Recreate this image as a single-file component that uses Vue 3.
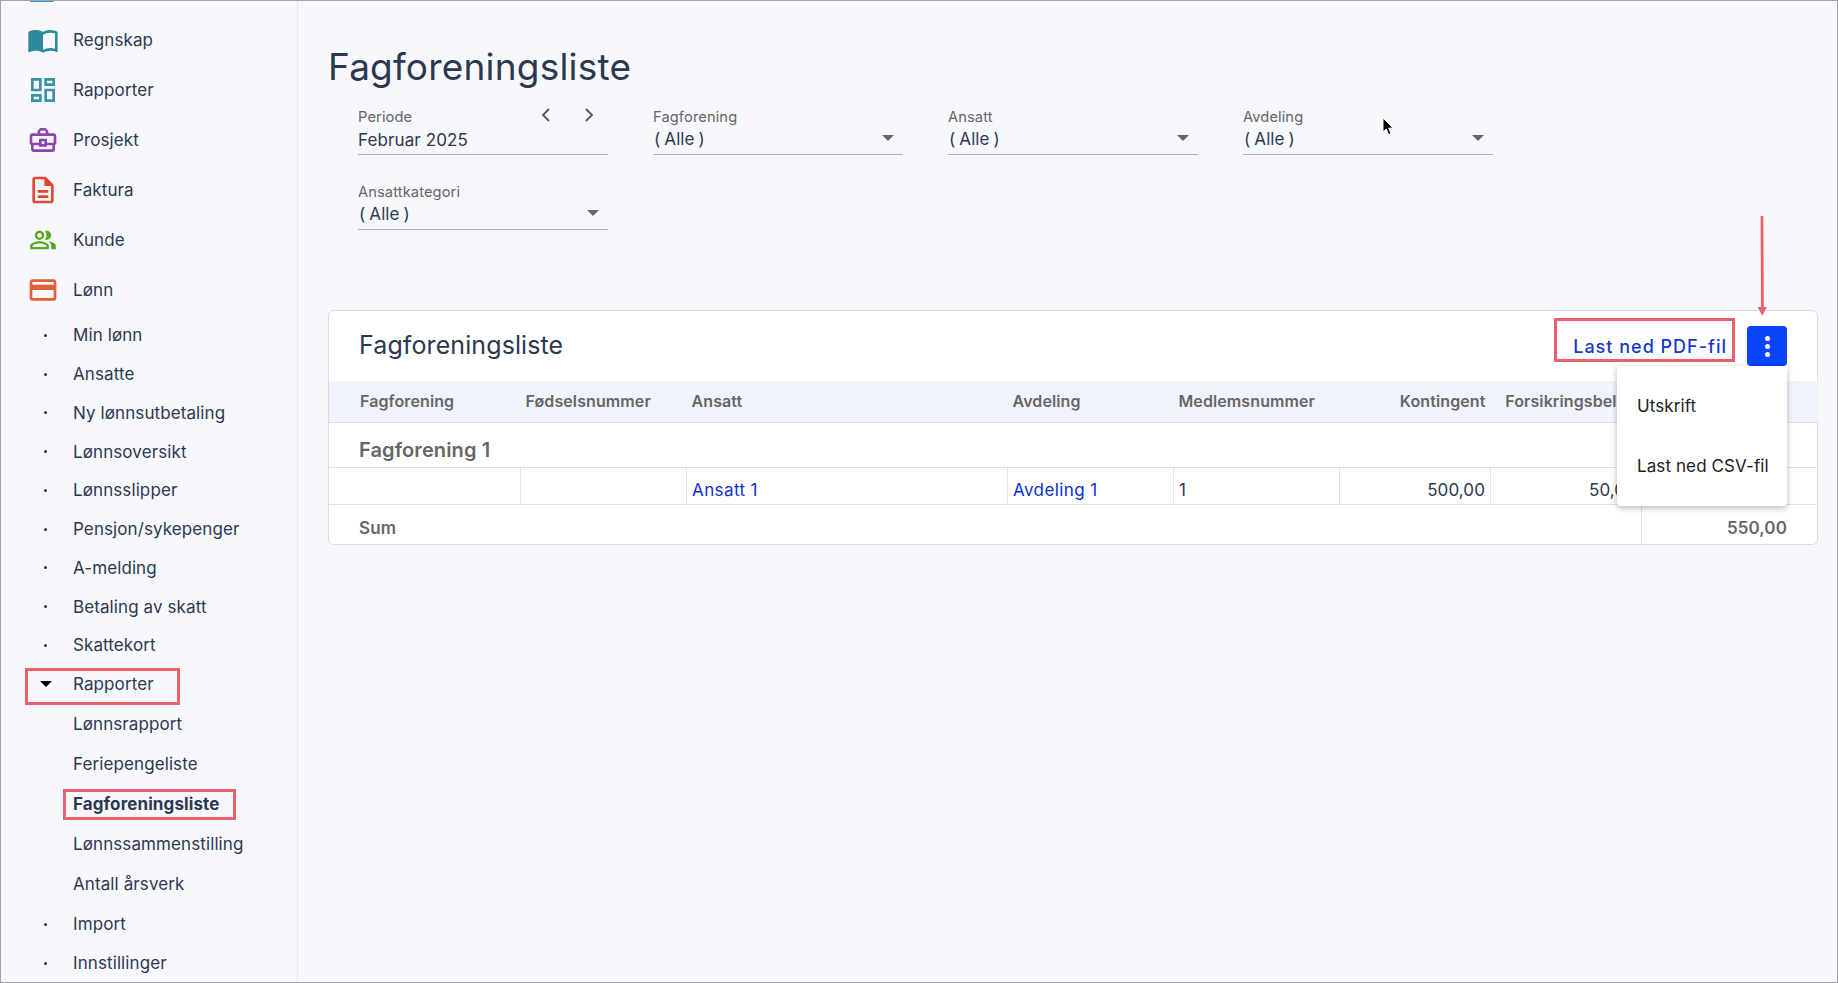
<template>
  <div class="page">
    <aside class="sidebar">
      <div class="nav-item">
        <svg class="nav-icon" viewBox="0 0 24 24" fill="#3498db"><path d="M2.25 4H20v17H2.25z" /></svg>
      </div>
      <div v-for="item in mainNav" :key="item.label" class="nav-item">
        <svg class="nav-icon" :class="item.cls" viewBox="0 0 24 24" :fill="item.color"><path :d="item.path" /></svg>
        <span class="nav-text">{{ item.label }}</span>
      </div>

      <div v-for="item in salaryNav" :key="item" class="sub-item">
        <span class="dot"></span>
        <span class="nav-text">{{ item }}</span>
      </div>

      <div class="sub-item">
        <span class="caret"></span>
        <span class="nav-text">Rapporter</span>
      </div>
      <div
        v-for="item in reportNav"
        :key="item"
        class="report-item"
        :class="{ active: item === 'Fagforeningsliste' }"
      >
        {{ item }}
      </div>

      <div v-for="item in bottomNav" :key="item" class="sub-item">
        <span class="dot"></span>
        <span class="nav-text">{{ item }}</span>
      </div>
    </aside>

    <main class="content">
      <h1 class="page-title">Fagforeningsliste</h1>

      <div class="filters">
        <div class="field">
          <label>Periode</label>
          <div class="value">Februar 2025</div>
          <div class="period-nav">
            <svg width="14" height="14" viewBox="0 0 14 14"><path d="M10 1 L4 7 L10 13" /></svg>
            <svg width="14" height="14" viewBox="0 0 14 14"><path d="M4 1 L10 7 L4 13" /></svg>
          </div>
        </div>
        <div v-for="name in filterNames" :key="name" class="field">
          <label>{{ name }}</label>
          <div class="value alle"><span class="paren-l">(</span>Alle<span class="paren-r">)</span></div>
          <span class="select-arrow"></span>
        </div>
      </div>

      <section class="card">
        <div class="card-header">
          <h2 class="card-title">Fagforeningsliste</h2>
          <div class="actions">
            <a class="pdf-link">Last ned PDF-fil</a>
            <button class="more-btn">
              <i></i><i></i><i></i>
            </button>
            <div class="menu">
              <div class="menu-item">Utskrift</div>
              <div class="menu-item">Last ned CSV-fil</div>
            </div>
          </div>
        </div>

        <table class="report-table">
          <colgroup>
            <col v-for="(w, i) in colWidths" :key="i" :style="{ width: w + 'px' }" />
          </colgroup>
          <thead>
            <tr>
              <th class="first">Fagforening</th>
              <th>Fødselsnummer</th>
              <th>Ansatt</th>
              <th>Avdeling</th>
              <th>Medlemsnummer</th>
              <th class="num">Kontingent</th>
              <th class="num">Forsikringsbeløp</th>
              <th class="num last">Sum</th>
            </tr>
          </thead>
          <tbody>
            <tr class="group-row">
              <td colspan="8">Fagforening 1</td>
            </tr>
            <tr class="data-row">
              <td></td>
              <td></td>
              <td><a class="link">Ansatt 1</a></td>
              <td><a class="link">Avdeling 1</a></td>
              <td>1</td>
              <td class="num">500,00</td>
              <td class="num">50,00</td>
              <td class="num last">550,00</td>
            </tr>
            <tr class="sum-row">
              <td colspan="7">Sum</td>
              <td class="num last">550,00</td>
            </tr>
          </tbody>
        </table>
      </section>
    </main>

    <!-- annotations on top of the screenshot -->
    <div class="mark mark-rapporter"></div>
    <div class="mark mark-liste"></div>
    <div class="mark mark-pdf"></div>
    <svg class="arrow" width="14" height="102" viewBox="0 0 14 102">
      <path d="M7 1 L7.4 92" stroke="#ee5f6e" stroke-width="2.8" stroke-linecap="round" fill="none" />
      <path d="M2.7 91 L11.7 91 L7.3 100 Z" fill="#ee5f6e" />
    </svg>
    <svg class="cursor" width="14" height="20" viewBox="0 0 14 20">
      <path d="M2 1 L2 15 L5.3 12 L7.6 17.6 L10 16.6 L7.7 11.2 L12 11 Z" fill="#000" stroke="#fff" stroke-width="1" />
    </svg>
  </div>
</template>

<script setup>
const mainNav = [
  {
    label: 'Regnskap',
    color: '#2e8a9c',
    path: 'M21 5c-1.11-.35-2.33-.5-3.5-.5-1.95 0-4.05.4-5.5 1.5-1.45-1.1-3.55-1.5-5.5-1.5S2.45 4.9 1 6v14.65c0 .25.25.5.5.5.1 0 .15-.05.25-.05C3.1 20.45 5.05 20 6.5 20c1.95 0 4.05.4 5.5 1.5 1.35-.85 3.8-1.5 5.5-1.5 1.65 0 3.35.3 4.75 1.05.1.05.15.05.25.05.25 0 .5-.25.5-.5V6c-.6-.45-1.25-.75-2-1zm0 13.5c-1.1-.35-2.3-.5-3.5-.5-1.7 0-4.15.65-5.5 1.5V8c1.35-.85 3.8-1.5 5.5-1.5 1.2 0 2.4.15 3.5.5v11.5z'
  },
  {
    label: 'Rapporter',
    color: '#3b92a6',
    path: 'M19 5v2h-4V5h4M9 5v6H5V5h4m10 8v6h-4v-6h4M9 17v2H5v-2h4M21 3h-8v6h8V3zM11 3H3v10h8V3zm10 8h-8v10h8V11zM11 15H3v6h8v-6z'
  },
  {
    label: 'Prosjekt',
    color: '#8e44ad',
    path: 'M20 7h-4V5l-2-2h-4L8 5v2H4c-1.1 0-2 .9-2 2v5c0 .75.4 1.38 1 1.73V19c0 1.11.89 2 2 2h14c1.11 0 2-.89 2-2v-3.28c.59-.35 1-.99 1-1.72V9c0-1.1-.9-2-2-2zM10 5h4v2h-4V5zM4 9h16v5h-5v-3H9v3H4V9zm9 6h-2v-2h2v2zm6 4H5v-3h4v1h6v-1h4v3z'
  },
  {
    label: 'Faktura',
    color: '#e2472f',
    path: 'M8 16h8v2H8zm0-4h8v2H8zm6-10H6c-1.1 0-2 .9-2 2v16c0 1.1.89 2 1.99 2H18c1.1 0 2-.9 2-2V8l-6-6zm4 18H6V4h7v5h5v11z'
  },
  {
    label: 'Kunde',
    cls: 'small',
    color: '#56a81e',
    path: 'M16.67 13.13C18.04 14.06 19 15.32 19 17v3h4v-3c0-2.18-3.57-3.47-6.33-3.87zM15 12c2.21 0 4-1.79 4-4s-1.79-4-4-4c-.47 0-.91.1-1.33.24C14.5 5.27 15 6.58 15 8s-.5 2.73-1.33 3.76c.42.14.86.24 1.33.24zM9 12c2.21 0 4-1.79 4-4s-1.79-4-4-4-4 1.79-4 4 1.79 4 4 4zm0-6c1.1 0 2 .9 2 2s-.9 2-2 2-2-.9-2-2 .9-2 2-2zM9 13c-2.67 0-8 1.34-8 4v3h16v-3c0-2.66-5.33-4-8-4zm6 5H3v-.99C3.2 16.29 6.3 15 9 15s5.8 1.29 6 2z'
  },
  {
    label: 'Lønn',
    color: '#e45f35',
    path: 'M20 4H4c-1.11 0-1.99.89-1.99 2L2 18c0 1.11.89 2 2 2h16c1.11 0 2-.89 2-2V6c0-1.11-.89-2-2-2zm0 14H4v-6h16v6zm0-10H4V6h16v2z'
  }
]

const salaryNav = [
  'Min lønn',
  'Ansatte',
  'Ny lønnsutbetaling',
  'Lønnsoversikt',
  'Lønnsslipper',
  'Pensjon/sykepenger',
  'A-melding',
  'Betaling av skatt',
  'Skattekort'
]

const reportNav = ['Lønnsrapport', 'Feriepengeliste', 'Fagforeningsliste', 'Lønnssammenstilling', 'Antall årsverk']
const bottomNav = ['Import', 'Innstillinger']
const filterNames = ['Fagforening', 'Ansatt', 'Avdeling', 'Ansattkategori']
const colWidths = [191.5, 166, 321, 166, 166, 151, 151, 176.5]
</script>

<style>
html,
body {
  margin: 0;
  background: #f7f8fe;
}
</style>

<style scoped>
.page {
  position: relative;
  display: flex;
  box-sizing: border-box;
  height: 983px;
  overflow: hidden;
  border: 1px solid #a3a3a3;
  background: #f7f8fe;
  color: #2c3850;
  font-family: Inter, "Noto Sans", sans-serif;
  font-size: 17px;
  letter-spacing: 0.1px;
}

.sidebar {
  flex: 0 0 297px;
  box-sizing: border-box;
  margin-top: -36px;
  border-right: 1px solid #e6e8f0;
}

.nav-item {
  display: flex;
  align-items: center;
  height: 50px;
}

.nav-icon {
  flex: 0 0 32px;
  width: 32px;
  height: 32px;
  margin: 0 14px 0 26px;
}

.nav-icon.small {
  flex-basis: 28px;
  width: 28px;
  height: 28px;
  margin: 0 16px 0 28px;
}

.sub-item {
  display: flex;
  align-items: center;
  height: 38.75px;
}

.nav-item + .sub-item {
  margin-top: 1px;
}

.report-item + .sub-item {
  margin-top: 1.5px;
}

.dot {
  width: 3px;
  height: 3px;
  margin: 0 26px 0 43px;
  border-radius: 50%;
  background: #2c3850;
}

.caret {
  width: 0;
  height: 0;
  margin: 0 21px 0 39px;
  border-top: 6px solid #000;
  border-left: 6px solid transparent;
  border-right: 6px solid transparent;
}

.report-item {
  display: flex;
  align-items: center;
  height: 40px;
  padding-left: 72px;
}

.report-item.active {
  font-weight: 700;
}

.content {
  flex: 1;
  min-width: 0;
  padding: 0 19px 0 30px;
}

.page-title {
  margin: 42px 0 0;
  font-size: 37px;
  line-height: 48px;
  font-weight: 400;
  letter-spacing: 0.2px;
}

.filters {
  display: flex;
  flex-wrap: wrap;
  width: 1240px;
  padding: 0 0 0 30px;
}

.field {
  position: relative;
  box-sizing: border-box;
  width: 250px;
  height: 47px;
  margin: 17px 45px 11px 0;
  border-bottom: 1px solid #aeb0b6;
}

.field label {
  display: block;
  height: 18px;
  font-size: 14.7px;
  line-height: 18px;
  color: #666;
}

.value {
  height: 28px;
  font-size: 17px;
  line-height: 28px;
}

.alle {
  line-height: 26px;
}

.paren-l {
  margin: 0 4px 0 1px;
}

.paren-r {
  margin-left: 4px;
}

.period-nav {
  position: absolute;
  top: 0;
  right: 12px;
  display: flex;
  gap: 29px;
}

.period-nav path {
  fill: none;
  stroke: #555;
  stroke-width: 1.8;
}

.select-arrow {
  position: absolute;
  right: 9px;
  top: 27px;
  border-top: 6px solid #666;
  border-left: 6px solid transparent;
  border-right: 6px solid transparent;
}

.card {
  margin-top: 69px;
  background: #fff;
  border: 1px solid #dcdde3;
  border-radius: 6px;
}

.card-header {
  display: flex;
  align-items: center;
  justify-content: space-between;
  height: 70px;
  padding: 0 30px;
}

.card-title {
  margin: -2px 0 0;
  font-size: 25px;
  font-weight: 400;
}

.actions {
  position: relative;
  display: flex;
  align-items: center;
}

.pdf-link {
  margin-right: 20px;
  color: #1539c9;
  font-size: 18px;
  font-weight: 500;
  letter-spacing: 1px;
}

.more-btn {
  display: flex;
  flex-direction: column;
  align-items: center;
  justify-content: center;
  gap: 3px;
  width: 40px;
  height: 40px;
  padding: 0;
  border: none;
  border-radius: 4px;
  background: #0a44ff;
}

.more-btn i {
  width: 5px;
  height: 5px;
  border-radius: 50%;
  background: #fff;
}

.menu {
  position: absolute;
  top: 100%;
  right: 0;
  z-index: 5;
  box-sizing: border-box;
  width: 170px;
  padding: 10px 0;
  background: #fff;
  border-radius: 0 0 4px 4px;
  box-shadow: 0 2px 6px rgba(0, 0, 0, 0.28);
}

.menu-item {
  display: flex;
  align-items: center;
  height: 60px;
  padding-left: 20px;
  color: #1c1c1c;
  font-size: 17px;
}

.report-table {
  width: 100%;
  table-layout: fixed;
  border-collapse: collapse;
}

.report-table th {
  height: 39px;
  padding: 0 5px 2px;
  background: #f2f4fd;
  border-bottom: 1px solid #dfe0e6;
  color: #666;
  font-size: 16px;
  font-weight: 600;
  text-align: left;
  white-space: nowrap;
  overflow: hidden;
}

.report-table th.first {
  padding-left: 31px;
}

.group-row td,
.sum-row td:first-child {
  padding-left: 30px;
}

.report-table .num {
  text-align: right;
}

.report-table .last {
  padding-right: 31px;
}

.group-row td {
  height: 33px;
  padding-top: 10px;
  line-height: 20px;
  border-bottom: 1px solid #dfe0e6;
  color: #666;
  font-size: 20px;
  font-weight: 600;
}

.data-row td {
  height: 28px;
  line-height: 20px;
  padding: 8px 5px 0;
  border-right: 1px solid #e3e4e8;
  border-bottom: 1px solid #dfe0e6;
}

.data-row td.last {
  border-right: none;
}

.link {
  color: #0d2fd0;
  letter-spacing: 0.4px;
}

.sum-row td {
  height: 30px;
  padding-top: 8px;
  line-height: 20px;
  color: #666;
  font-weight: 600;
}

.sum-row td.last {
  border-left: 1px solid #e3e4e8;
}

.mark {
  position: absolute;
  box-sizing: border-box;
  border: 3px solid #ee5f6e;
  pointer-events: none;
}

.mark-rapporter {
  left: 24px;
  top: 667px;
  width: 155px;
  height: 37px;
}

.mark-liste {
  left: 62px;
  top: 788px;
  width: 173px;
  height: 31px;
}

.mark-pdf {
  left: 1553px;
  top: 317px;
  width: 181px;
  height: 44px;
}

.arrow {
  position: absolute;
  left: 1754px;
  top: 215px;
}

.cursor {
  position: absolute;
  left: 1380px;
  top: 116px;
}
</style>
